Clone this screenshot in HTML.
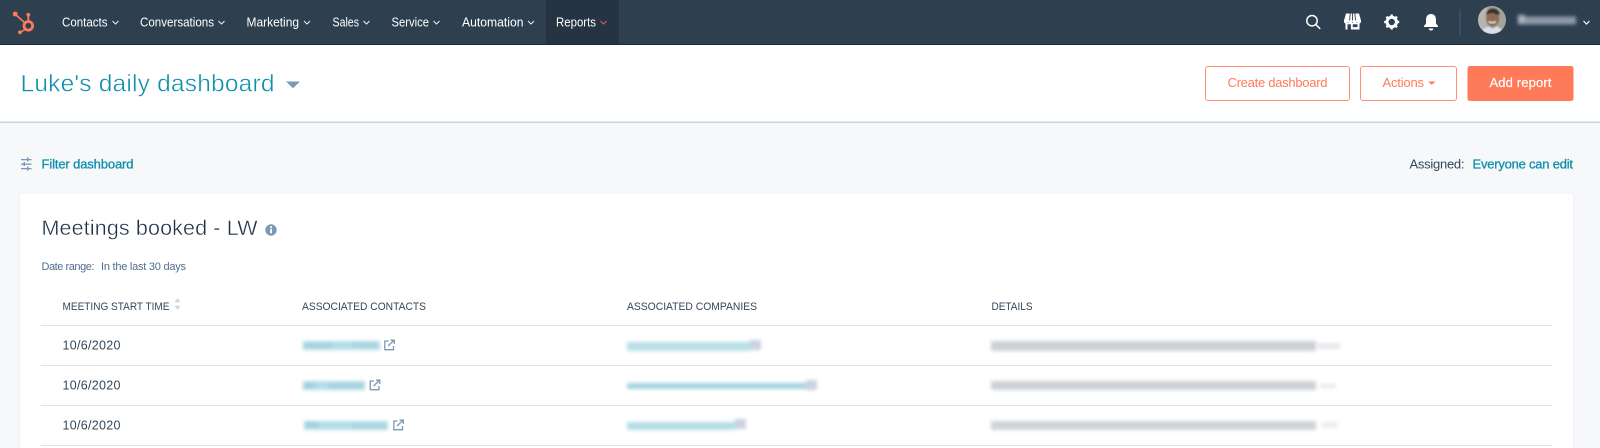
<!DOCTYPE html>
<html lang="en"><head><meta charset="utf-8"><title>Luke's daily dashboard</title>
<style>
html,body{margin:0;padding:0;width:1600px;height:448px;overflow:hidden;background:#f6f8fa}
svg{display:block}
text{font-family:"Liberation Sans",sans-serif}
</style></head><body>
<svg width="1600" height="448" viewBox="0 0 1600 448" xmlns="http://www.w3.org/2000/svg">
<defs>
<filter id="b" x="-10%" y="-80%" width="120%" height="260%"><feGaussianBlur stdDeviation="1.8"/></filter>
<filter id="s" x="-10%" y="-10%" width="120%" height="120%"><feGaussianBlur stdDeviation="0.8"/></filter>
<clipPath id="av"><circle cx="1492" cy="20" r="14"/></clipPath>
<filter id="card" x="-2%" y="-10%" width="104%" height="120%"><feDropShadow dx="0" dy="0" stdDeviation="2" flood-color="#cbd6e2" flood-opacity=".2"/></filter>
</defs>

<!-- page -->
<rect width="1600" height="448" fill="#f6f8fa"/>

<!-- nav -->
<rect width="1600" height="44" fill="#2e3f50"/>
<rect y="44" width="1600" height="1" fill="#1b2a40"/>
<rect x="546" width="73" height="44" fill="#253342"/>

<!-- logo -->
<g fill="none" stroke="#ff7a59" stroke-linecap="round">
<circle cx="28.300" cy="25.800" r="4.300" stroke-width="2.800"/>
<path d="M28.300 20V15" stroke-width="1.800"/>
<path d="M24.500 22.500L15.500 14.500" stroke-width="1.600"/>
<path d="M25 29.500L20 32.500" stroke-width="1.600"/>
</g>
<g fill="#ff7a59"><circle cx="28.300" cy="14.800" r="1.900"/><circle cx="15.200" cy="14" r="2.400"/><circle cx="20" cy="32.300" r="1.900"/></g>

<!-- nav text -->
<g fill="#fff" font-size="13">
<text x="62" y="26.500" textLength="45.500" lengthAdjust="spacingAndGlyphs">Contacts</text>
<text x="140" y="26.500" textLength="74" lengthAdjust="spacingAndGlyphs">Conversations</text>
<text x="246.500" y="26.500" textLength="52.500" lengthAdjust="spacingAndGlyphs">Marketing</text>
<text x="332.500" y="26.500" textLength="26.500" lengthAdjust="spacingAndGlyphs">Sales</text>
<text x="391.500" y="26.500" textLength="37.500" lengthAdjust="spacingAndGlyphs">Service</text>
<text x="462" y="26.500" textLength="61.500" lengthAdjust="spacingAndGlyphs">Automation</text>
<text x="556" y="26.500" textLength="40" lengthAdjust="spacingAndGlyphs">Reports</text>
</g>
<g fill="none" stroke="#e6ebf0" stroke-width="1.100">
<path d="M112.500 21l3 3 3-3"/><path d="M218.500 21l3 3 3-3"/><path d="M304 21l3 3 3-3"/><path d="M363.500 21l3 3 3-3"/><path d="M433.500 21l3 3 3-3"/><path d="M528 21l3 3 3-3"/>
<path d="M600.500 21l3 3 3-3" stroke="#f2545b"/>
</g>

<!-- search -->
<g fill="none" stroke="#fff" stroke-width="1.500" stroke-linecap="round">
<circle cx="1312" cy="20.700" r="5.200"/><path d="M1316 24.700l3.800 3.800"/>
</g>
<!-- store -->
<path d="M1346 13.500h13l2 7v1.200c0 1-.9 1.700-1.900 1.700s-1.700-.5-2.200-1.300c-.5.800-1.200 1.300-2.200 1.300s-1.700-.5-2.200-1.300c-.5.800-1.200 1.300-2.200 1.300s-1.700-.5-2.200-1.300c-.5.800-1.200 1.300-2.200 1.300s-1.900-.7-1.900-1.700v-1.200z" fill="#fff"/>
<rect x="1345.500" y="23" width="14" height="6.500" fill="#fff"/>
<g fill="#2e3f50">
<path d="M1349.700 13.500h.9l-.5 7h-.9z"/><path d="M1352.100 13.500h.9v7h-.9z"/><path d="M1354.500 13.500h.9l.5 7h-.9z"/>
<rect x="1347.500" y="24.300" width="3.400" height="5.200"/><rect x="1352.800" y="24.300" width="4.700" height="2.800"/>
</g>
<!-- gear -->
<circle cx="1391.700" cy="22" r="4.700" fill="none" stroke="#fff" stroke-width="3"/>
<g stroke="#fff" stroke-width="2.400">
<path d="M1391.700 14.500v3"/><path d="M1391.700 26.500v3"/><path d="M1384.200 22h3"/><path d="M1396.200 22h3"/>
<path d="M1386.400 16.700l2.100 2.100"/><path d="M1394.900 25.200l2.100 2.100"/><path d="M1397 16.700l-2.100 2.100"/><path d="M1388.500 25.200l-2.100 2.100"/>
</g>
<!-- bell -->
<g fill="#fff">
<path d="M1431 14c3.600 0 5 2.700 5 6v3.500l2 2.500v1h-14v-1l2-2.500V20c0-3.300 1.400-6 5-6z"/>
<path d="M1428.700 28.500h4.600c0 1.300-1 2-2.300 2s-2.300-.7-2.300-2z"/>
</g>
<rect x="1459.500" y="9" width="1.200" height="27" fill="#3f5a78"/>

<!-- avatar -->
<g clip-path="url(#av)">
<rect x="1478" y="6" width="28" height="28" fill="#a3a29b"/>
<g filter="url(#s)">
<rect x="1478" y="6" width="9" height="28" fill="#b6b5ae"/>
<ellipse cx="1492.500" cy="18.500" rx="6.500" ry="8" fill="#8f6a55"/>
<path d="M1486 15c0-4.500 3.500-6.500 7-6.500s6.500 2.500 6.500 6l-2 .5c-3-2-6.500-2.500-9.500-1z" fill="#3a322e"/>
<path d="M1488 20.500c2 2 6.500 2 8.500-.2l-1.500 3h-5.500z" fill="#efe9e2"/>
<path d="M1481 34c1-5 5-7.500 8-7.500l3.500 2 4-2c3 .5 6 3 7 7.500z" fill="#d8dde6"/>
</g>
</g>
<!-- nav name blurred -->
<g filter="url(#b)">
<rect x="1518" y="16.500" width="58" height="8" fill="#8c98a6"/>
<rect x="1518" y="15" width="7" height="8" fill="#aab4bf"/>
</g>
<path d="M1583.500 21l3 3 3-3" fill="none" stroke="#fff" stroke-width="1.200"/>

<!-- header -->
<rect y="45" width="1600" height="77" fill="#fff"/>
<rect y="121.500" width="1600" height="1.500" fill="#cbd6e2"/>
<text x="20.500" y="91.500" font-size="24.500" fill="#0f8fab" stroke="#fff" stroke-width=".45" textLength="254" lengthAdjust="spacing">Luke's daily dashboard</text>
<path d="M286 81.500h14l-7 6.800z" fill="#7c98b6"/>

<!-- buttons -->
<rect x="1205.500" y="66.500" width="144" height="34" rx="2.500" fill="#fff" stroke="#ff8f73"/>
<text x="1227.500" y="87" font-size="13" fill="#ff7a59" textLength="100" lengthAdjust="spacing">Create dashboard</text>
<rect x="1360.500" y="66.500" width="96" height="34" rx="2.500" fill="#fff" stroke="#ff8f73"/>
<text x="1382.500" y="87" font-size="13" fill="#ff7a59" textLength="41.500" lengthAdjust="spacing">Actions</text>
<path d="M1428 81.500h7.500l-3.750 3.200z" fill="#ff7a59"/>
<rect x="1467.500" y="66" width="106" height="35" rx="2.500" fill="#ff7a59"/>
<text x="1489.500" y="87" font-size="13" fill="#fff" stroke="#fff" stroke-width=".2" textLength="62" lengthAdjust="spacing">Add report</text>

<!-- filter row -->
<g fill="#7c98b6">
<rect x="21" y="159" width="10.500" height="1.300"/><rect x="21" y="163.500" width="10.500" height="1.300"/><rect x="21" y="168" width="10.500" height="1.300"/>
<rect x="27" y="157.500" width="1.500" height="4"/><rect x="23.500" y="162" width="1.500" height="4"/><rect x="27" y="166.500" width="1.500" height="4"/>
</g>
<text x="41.500" y="168.500" font-size="13" fill="#0f8fab" stroke="#0f8fab" stroke-width=".3" textLength="92" lengthAdjust="spacing">Filter dashboard</text>
<text x="1409.500" y="168.500" font-size="13" fill="#33475b" textLength="55" lengthAdjust="spacing">Assigned:</text>
<text x="1472.500" y="168.500" font-size="13" fill="#0f8fab" stroke="#0f8fab" stroke-width=".3" textLength="100.500" lengthAdjust="spacing">Everyone can edit</text>

<!-- card -->
<rect x="20" y="193.500" width="1553" height="270" rx="3" fill="#fff" filter="url(#card)"/>
<text x="41.500" y="235" font-size="21.500" fill="#1f3247" stroke="#fff" stroke-width=".4" textLength="216" lengthAdjust="spacing">Meetings booked - LW</text>
<circle cx="271" cy="230" r="5.700" fill="#7c98b6"/>
<rect x="270.100" y="229" width="1.900" height="4.300" fill="#fff"/><rect x="270.100" y="226.300" width="1.900" height="1.800" fill="#fff"/>
<text x="41.500" y="269.800" font-size="11" fill="#516f90" textLength="53" lengthAdjust="spacing">Date range:</text>
<text x="101" y="269.800" font-size="11" fill="#516f90" textLength="85" lengthAdjust="spacing">In the last 30 days</text>

<!-- table head -->
<g font-size="11" fill="#33475b">
<text x="62.500" y="310" textLength="107" lengthAdjust="spacingAndGlyphs">MEETING START TIME</text>
<text x="302" y="310" textLength="124" lengthAdjust="spacingAndGlyphs">ASSOCIATED CONTACTS</text>
<text x="627" y="310" textLength="130" lengthAdjust="spacingAndGlyphs">ASSOCIATED COMPANIES</text>
<text x="991.500" y="310" textLength="41" lengthAdjust="spacingAndGlyphs">DETAILS</text>
</g>
<path d="M177.500 298l3 4.300h-6z M177.500 310l3-4.300h-6z" fill="#cbd6e2"/>

<!-- lines -->
<g fill="#dfe3eb">
<rect x="41" y="325" width="1511" height="1"/><rect x="41" y="365" width="1511" height="1"/>
<rect x="41" y="405" width="1511" height="1"/><rect x="41" y="445" width="1511" height="1"/>
</g>

<!-- dates -->
<g font-size="12.500" fill="#33475b">
<text x="62.500" y="349.500" textLength="58" lengthAdjust="spacing">10/6/2020</text>
<text x="62.500" y="389.500" textLength="58" lengthAdjust="spacing">10/6/2020</text>
<text x="62.500" y="429.500" textLength="58" lengthAdjust="spacing">10/6/2020</text>
</g>

<!-- blurred contacts -->
<g filter="url(#b)">
<rect x="303" y="341" width="77" height="9" fill="#b5dde6"/>
<rect x="303" y="343" width="30" height="5" fill="#a3d4df"/><rect x="352" y="342" width="26" height="6" fill="#a8d6e1"/>
<rect x="303" y="381" width="62" height="9" fill="#b5dde6"/>
<rect x="303" y="383" width="12" height="5" fill="#9bd0dc"/><rect x="328" y="383" width="35" height="6" fill="#a3d4df"/>
<rect x="304" y="421" width="84" height="9" fill="#b5dde6"/>
<rect x="305" y="422" width="14" height="5" fill="#9bd0dc"/><rect x="352" y="423" width="34" height="6" fill="#a8d6e1"/>
</g>
<!-- blurred companies -->
<g filter="url(#b)">
<rect x="627" y="342" width="123" height="9" fill="#b9dfe7"/>
<rect x="750" y="340" width="11" height="10" fill="#c9d3df"/>
<rect x="627" y="383" width="179" height="6" fill="#a3d4df"/>
<rect x="806" y="380" width="11" height="10" fill="#c9d3df"/>
<rect x="627" y="422" width="108" height="8" fill="#b5dde6"/>
<rect x="735" y="419" width="11" height="10" fill="#c9d3df"/>
</g>
<!-- blurred details -->
<g filter="url(#b)">
<rect x="991" y="341" width="325" height="10" fill="#cdd1d6"/>
<rect x="1318" y="343" width="22" height="6" fill="#e6e8ec"/>
<rect x="991" y="381" width="325" height="9" fill="#cdd1d6"/>
<rect x="1320" y="384" width="16" height="4" fill="#e8eaed"/>
<rect x="991" y="421" width="325" height="9" fill="#cfd3d8"/>
<rect x="1322" y="422" width="16" height="6" fill="#ebedf0"/>
</g>

<!-- external icons -->
<g fill="none" stroke="#7c98b6" stroke-width="1.300">
<g transform="translate(384 339.500)">
<path d="M4.500 1.500H.8v8.700h8.700V6.500"/><path d="M4 6.500L10 .8M6.500.7h3.800v3.800"/>
</g>
<g transform="translate(369.500 379.500)">
<path d="M4.500 1.500H.8v8.700h8.700V6.500"/><path d="M4 6.500L10 .8M6.500.7h3.800v3.800"/>
</g>
<g transform="translate(393 419.500)">
<path d="M4.500 1.500H.8v8.700h8.700V6.500"/><path d="M4 6.500L10 .8M6.500.7h3.800v3.800"/>
</g>
</g>
</svg>
</body></html>
